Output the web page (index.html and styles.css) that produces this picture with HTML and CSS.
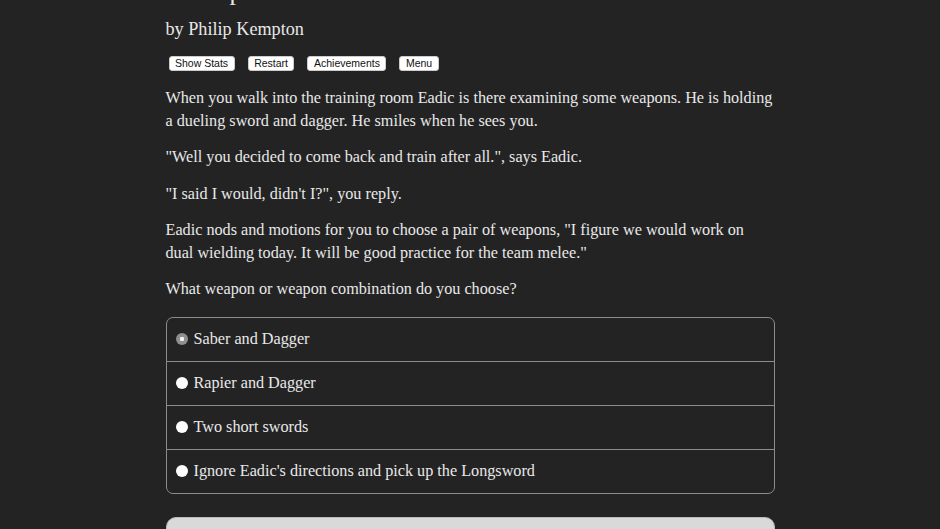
FILE: index.html
```html
<!DOCTYPE html>
<html>
<head>
<meta charset="utf-8">
<link rel="stylesheet" href="styles.css">
</head>
<body>
<div class="page">
  <h1 class="title">Champion of the Gods</h1>
  <h2 class="author">by Philip Kempton</h2>
  <div class="buttons">
    <button class="btn">Show Stats</button>
    <button class="btn">Restart</button>
    <button class="btn">Achievements</button>
    <button class="btn">Menu</button>
  </div>
  <div class="text">
    <p>When you walk into the training room Eadic is there examining some weapons. He is holding a dueling sword and dagger. He smiles when he sees you.</p>
    <p>"Well you decided to come back and train after all.", says Eadic.</p>
    <p>"I said I would, didn't I?", you reply.</p>
    <p>Eadic nods and motions for you to choose a pair of weapons, "I figure we would work on dual wielding today. It will be good practice for the team melee."</p>
    <p>What weapon or weapon combination do you choose?</p>
  </div>
  <div class="choices">
    <label class="choice"><span class="radio selected"></span>Saber and Dagger</label>
    <label class="choice"><span class="radio"></span>Rapier and Dagger</label>
    <label class="choice"><span class="radio"></span>Two short swords</label>
    <label class="choice"><span class="radio"></span>Ignore Eadic's directions and pick up the Longsword</label>
  </div>
  <button class="next">Next</button>
</div>
</body>
</html>
```

FILE: styles.css
```css
html, body {
  margin: 0;
  padding: 0;
  background: #232323;
  height: 100%;
  overflow: hidden;
}
.page {
  width: 609px;
  margin: 0 auto;
  font-family: "Liberation Serif", "Times New Roman", serif;
  color: #e8e8e8;
}
.title {
  font-size: 26px;
  line-height: 30px;
  font-weight: normal;
  margin: -23px 0 0 2px;
}
.author {
  font-size: 18.2px;
  line-height: 24px;
  font-weight: normal;
  margin: 10px 0 0 0;
}
.buttons {
  display: flex;
  gap: 13px;
  margin: 15px 0 0 3px;
}
.btn {
  font-family: "Liberation Sans", Arial, sans-serif;
  font-size: 10.5px;
  line-height: 13px;
  height: 15px;
  padding: 0 5.5px;
  background: #fff;
  color: #111;
  border: 1px solid #ccc;
  border-radius: 3px;
}
.text {
  font-size: 16.2px;
  line-height: 22.5px;
  margin-top: 16px;
}
.text p {
  margin: 0 0 14px 0;
}
.choices {
  border: 1px solid #8c8c8c;
  border-radius: 7px;
  margin-top: 16px;
  overflow: hidden;
}
.choice {
  display: flex;
  align-items: center;
  height: 43px;
  font-size: 16.2px;
  padding-left: 9px;
  border-top: 1px solid #8c8c8c;
}
.choice:first-child {
  border-top: none;
}
.radio {
  width: 12px;
  height: 12px;
  border-radius: 50%;
  background: #fff;
  margin-right: 6px;
  box-sizing: border-box;
}
.radio.selected {
  background: radial-gradient(circle, #f0f0f0 0 2px, #8e8e8e 2.5px);
}
.next {
  display: block;
  width: 100%;
  height: 40px;
  margin-top: 23px;
  background: #d9d9d9;
  border: 1px solid #bbb;
  border-radius: 10px;
  font-family: "Liberation Serif", serif;
  font-size: 18px;
  color: #111;
}
```
